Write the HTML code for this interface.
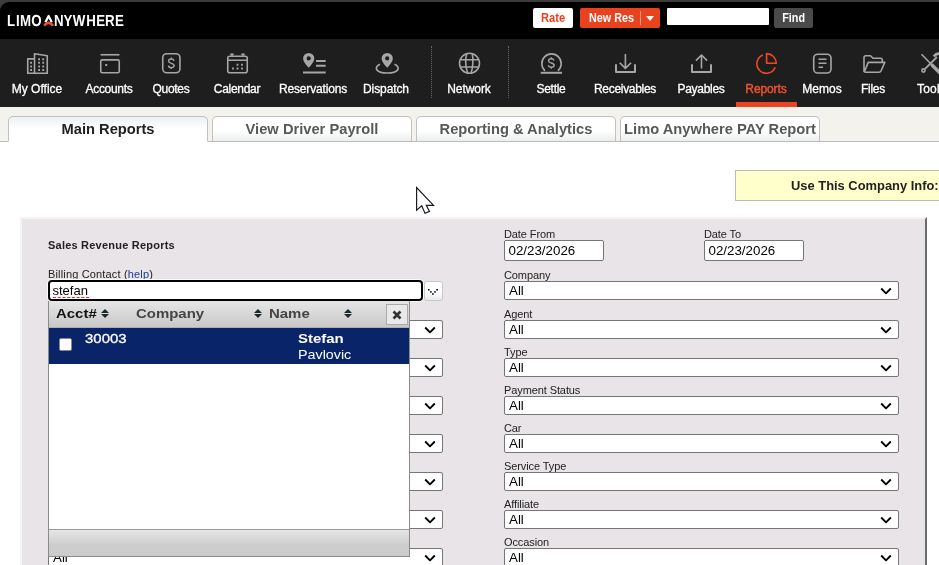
<!DOCTYPE html>
<html><head><meta charset="utf-8">
<style>
*{box-sizing:border-box;margin:0;padding:0}
html,body{width:939px;height:565px;overflow:hidden;background:#fff;font-family:"Liberation Sans",sans-serif;}
#root{will-change:transform;position:relative;width:939px;height:565px;overflow:hidden;background:#fff}
.abs{position:absolute}
#topgray{left:0;top:0;width:939px;height:12px;background:#3c3c3c}
#hdr{left:0;top:2px;width:960px;height:37px;background:#000;border-top-left-radius:9px}
.btn{position:absolute;font-weight:bold;font-size:12px;text-align:center;border-radius:2px;white-space:nowrap}
#rate{left:533px;top:8px;width:40px;height:20px;background:#fff;color:#e8421f;line-height:20px}
#newres{left:580px;top:8px;width:80px;height:20px;background:#e8421f;color:#fff;line-height:20px;text-align:left;padding-left:9px}
#find{left:774px;top:8px;width:39px;height:20px;background:#4a4a4a;color:#fff;line-height:20px}
#srch{left:667px;top:8px;width:102px;height:17px;background:#fff;border-radius:1px}
#nav{left:0;top:39px;width:939px;height:68px;background:#1e1e1e}
.ni{position:absolute;top:0;height:68px;color:#fff;font-size:12px;letter-spacing:-0.3px;-webkit-text-stroke:0.3px #fff;text-align:center;white-space:nowrap}
.ni span{position:absolute;left:-30px;right:-30px;top:43px;line-height:14px;text-align:center}
.ni.act{color:#f0512b;-webkit-text-stroke:0.45px #f0512b}
.sep{position:absolute;top:46px;height:52px;width:0;border-left:1px dotted #666}
#tabbar{left:0;top:107px;width:939px;height:35px;background:#f4f2ec;border-bottom:1px solid #bdbdbd}
.tab{position:absolute;top:116px;height:26px;border:1px solid #c2c2c2;border-bottom:1px solid #bdbdbd;border-radius:5px 5px 0 0;background:linear-gradient(#fff 55%,#eceeee);color:#585858;font-weight:bold;font-size:14.700px;line-height:24px;text-align:center;white-space:nowrap}
.tab.sel{background:linear-gradient(#ecf0f2,#fff 50%);color:#222;border-bottom:1px solid #fff}
#useco{left:735px;top:170px;width:220px;height:31px;background:#ffffcc;border:1px solid #bbb;font-weight:bold;font-size:12px;line-height:31px;color:#222;padding-left:55px;white-space:nowrap}
#panel{left:20px;top:217px;width:907px;height:360px;background:#e8e4e8;border-right:2px solid #6a6a6a;border-top:2px solid #f4f4f4;border-left:2px solid #f4f4f4}
.lbl{position:absolute;font-size:11px;color:#222;line-height:13px;white-space:nowrap;letter-spacing:-0.100px}
.sel2{position:absolute;left:504px;width:395px;height:19px;background:#fff;border:1px solid #767676;border-radius:2px;font-size:13.330px;line-height:17px;padding-left:4px;color:#000}
.chev{position:absolute;width:12px;height:8px}
.sel2 .chev{right:6px;top:5px}
.dt{position:absolute;height:21px;width:100px;background:#fff;border:1px solid #767676;border-radius:2px;font-size:13.330px;line-height:19px;padding-left:3.500px;color:#000}
.ssel{position:absolute;left:48px;width:395px;height:19px;background:#fff;border:1px solid #767676;border-radius:2px}
.ssel .chev{right:6px;top:5px}

#bc{left:48px;top:280px;width:375px;height:21px;background:#fff;border:2px solid #000;border-radius:4px;font-size:13px;line-height:18px;padding-left:2.500px;color:#000;box-shadow:0 0 0 1px #fbfafb}
#bc i{position:absolute;left:3px;top:14.500px;width:36px;height:0;border-top:1px dashed #f22}
#bcbtn{left:424px;top:281px;width:19px;height:20px;background:linear-gradient(#fff 55%,#eaeaea);border:1px solid #c8c8c8;border-radius:3px}
#dd{left:48px;top:301px;width:362px;height:256px;background:#fff;border:1px solid #8a8a8a;border-top:none}
#ddh{position:absolute;left:0;top:0;width:360px;height:27px;background:linear-gradient(#e6e6e6,#c8c8c8);border-bottom:1px solid #b0b0b0}
#ddr{position:absolute;left:0;top:27px;width:360px;height:36px;background:#0a246a;color:#fff}
#ddf{position:absolute;left:0;top:228px;width:360px;height:27px;background:linear-gradient(#e6e6e6,#cccccc 60%);border-top:1px solid #999}
.vx{position:absolute;top:5px;font-size:13px;line-height:16px;color:#444;white-space:nowrap;transform-origin:0 50%;transform:scaleX(1.15)}
#ddr .vx{color:#fff}
.srt{position:absolute;top:7.500px;width:8px;height:10px;margin-left:-0.500px}
.srt:before{content:"";position:absolute;left:0;top:0;border:4px solid transparent;border-bottom:4.500px solid #1c2a2e;border-top:none}
.srt:after{content:"";position:absolute;left:0;top:5.500px;border:4px solid transparent;border-top:4.500px solid #1c2a2e;border-bottom:none}
#ddx{position:absolute;left:337px;top:3px;width:22px;height:21px;background:#e9e9e9;border:1px solid #aaa}
#cb{position:absolute;left:9.500px;top:10px;width:13px;height:13px;background:#fff;border:1px solid #8a8a8a;border-radius:2px}

#icons .g *{fill:none;stroke:#a6a6a6;stroke-width:1.600;stroke-linecap:butt;stroke-linejoin:round}
#icons .g .w{stroke-width:2}
#icons .g .ds{stroke-width:1.350}
#icons .g .f{fill:#a6a6a6;stroke:none;fill-rule:evenodd}
#icons .g.o *{stroke:#f2481f}
#icons .d{font-family:"Liberation Sans",sans-serif;fill:#a6a6a6;text-anchor:middle}
</style></head><body><div id="root">
<div class="abs" id="topgray"></div>
<div class="abs" id="hdr"></div>
<svg class="abs" id="logo" style="left:0;top:8px;width:135px;height:24px" viewBox="0 8 135 24"><text transform="scale(0.83,1.0)" x="8.50 19.36 24.18 37.55 65.15 76.59 87.59 103.94 116.11 126.59 138.64" y="26.00" style="font:bold 16.0px 'Liberation Sans',sans-serif;fill:#fff;text-rendering:geometricPrecision">LIMONYWHERE</text><path d="M45.400 22.200L48.600 15.900L51.800 22.200" fill="none" stroke="#fff" stroke-width="2.200" stroke-linejoin="round"/><path d="M44.200 25.800Q48.600 19.600 53 25.800" fill="none" stroke="#f04e23" stroke-width="2.600"/></svg>
<div class="btn" id="rate"><span style="display:inline-block;transform:scaleX(0.93)">Rate</span></div>
<div class="btn" id="newres"><span style="display:inline-block;transform-origin:0 50%;transform:scaleX(0.9)">New Res</span><i style="position:absolute;left:60px;top:3px;height:14px;border-left:1px solid #f39a86"></i><i style="position:absolute;left:66px;top:8px;border:4px solid transparent;border-top:5px solid #fff;border-bottom:none"></i></div>
<div class="abs" id="srch"></div>
<div class="btn" id="find"><span style="display:inline-block;transform:scaleX(0.9)">Find</span></div>

<div class="abs" id="nav">
 <div class="ni" style="left:12px;width:50px"><span style="letter-spacing:0px">My Office</span></div>
 <div class="ni" style="left:84px;width:50px"><span>Accounts</span></div>
 <div class="ni" style="left:146px;width:50px"><span>Quotes</span></div>
 <div class="ni" style="left:212px;width:50px"><span>Calendar</span></div>
 <div class="ni" style="left:288px;width:50px"><span style="letter-spacing:-0.15px">Reservations</span></div>
 <div class="ni" style="left:361px;width:50px"><span style="letter-spacing:-0.1px">Dispatch</span></div>
 <div class="ni" style="left:444px;width:50px"><span style="letter-spacing:-0.05px">Network</span></div>
 <div class="ni" style="left:526px;width:50px"><span>Settle</span></div>
 <div class="ni" style="left:600px;width:50px"><span>Receivables</span></div>
 <div class="ni" style="left:676px;width:50px"><span>Payables</span></div>
 <div class="ni act" style="left:741px;width:50px"><span style="letter-spacing:-0.1px">Reports</span></div>
 <div class="ni" style="left:797px;width:50px"><span style="letter-spacing:0px">Memos</span></div>
 <div class="ni" style="left:848px;width:50px"><span>Files</span></div>
 <div class="ni" style="left:912px;width:50px"><span style="text-align:left;left:5px;letter-spacing:0.2px">Tools</span></div>
 <div class="abs" style="left:736px;top:63px;width:61px;height:5px;background:#ee4220"></div>
</div>
<svg class="abs" id="icons" style="left:0;top:39px;width:939px;height:68px" viewBox="0 39 939 68">
<g class="g">
<!-- my office -->
<path d="M27.750 73.250V58.900H34.500M34.500 73.250V53.800L47.250 55.700V73.250M27 73.250H48"/>
<path class="w" d="M38.200 59.200h1.800M42.300 59.200h1.800M38.200 62.800h1.800M42.300 62.800h1.800M38.200 66.400h1.800M42.300 66.400h1.800M38.200 70h1.800M42.300 70h1.800M30.200 62.800h1.800M30.200 66.400h1.800M30.200 70h1.800"/>
<!-- accounts -->
<rect x="100.750" y="59.900" width="18.500" height="12.800" rx="1.500"/><path d="M100.500 54.750H119.500"/><path class="w" d="M105.200 65h2"/>
<!-- quotes -->
<rect x="162.750" y="53.750" width="17.200" height="19" rx="4"/>
<!-- calendar -->
<rect x="227.750" y="56.300" width="19.500" height="16.500" rx="2"/><path d="M228 60.300H247M232 53.500V56.500M243 53.500V56.500M230.300 54.300H233.700M241.300 54.300H244.700"/>
<path class="w" d="M236.600 64.800h1.800M241.100 64.800h1.800M232.100 68.600h1.800M236.600 68.600h1.800M241.100 68.600h1.800"/>
<!-- reservations -->
<path class="f" d="M308.700 67.800c-3.800-4.200-5.600-6.800-5.600-9.300a5.600 5.600 0 0 1 11.200 0c0 2.500-1.800 5.100-5.600 9.300zM308.700 56.300a2.100 2.100 0 1 0 0 4.200a2.100 2.100 0 1 0 0-4.200z"/>
<path class="w" d="M316 61h9.700M316 65.700h9.700M303 72.500h22.700"/>
<!-- dispatch -->
<path class="f" d="M387.200 67.800c-3.800-4.200-5.600-6.800-5.600-9.300a5.600 5.600 0 0 1 11.200 0c0 2.500-1.800 5.100-5.600 9.300zM387.200 56.300a2.100 2.100 0 1 0 0 4.200a2.100 2.100 0 1 0 0-4.200z"/>
<path d="M380 64.200C373.500 67.200 375.500 73 387.300 73S401 67.200 394.500 64.200" style="stroke-width:1.700"/>
<!-- network -->
<g style="stroke-width:1.150"><circle cx="469.500" cy="63.300" r="10"/><path d="M460.500 59.800H478.500M460.500 67H478.500M466.800 54C465 58 465.500 69 468 73M472.300 54C473.500 59 473 68 471 73"/></g>
<!-- settle -->
<path d="M545 70.800A9.700 9.700 0 1 1 558 70.800"/><path class="w" d="M540.700 72.800H562"/>
<!-- receivables -->
<path class="w" d="M616 64.200V72H635V64.200"/><path d="M625.400 54V68M619.700 62.700L625.400 68.400L631.100 62.700"/>
<!-- payables -->
<path class="w" d="M692 64.200V71.900H711V64.200"/><path d="M701.500 68.600V55M695.900 60.600L701.500 55L707.100 60.600"/>
<!-- memos -->
<rect x="813.700" y="54.200" width="17.300" height="18.800" rx="4"/><path d="M818.500 59.300H826.500M818.500 63.300H826.500M818.500 67.300H823"/>
<!-- files -->
<path d="M864 72V57.500Q864 55.700 865.800 55.700H870.500L873 58.200H880.500Q882.300 58.200 882.300 60V62.200M864.200 72.200L868.200 62.400H884.800L881 71Q880.500 72.200 879 72.200H865.500Q864 72.200 864 70.700"/>
<!-- tools -->
<path d="M921.500 54.200L932 65"/><path d="M931.500 64.500L941 74" style="stroke-width:3.400"/><path d="M937 57L925 68.800" style="stroke-width:1.800"/><circle cx="923.500" cy="70.500" r="1.600"/><path d="M933.800 56.500q2.500-3.500 6.500-2.800" style="stroke-width:2.600"/>
<path class="ds" d="M173.96 60.92C173.68 59.31 172.25 59.02 171.30 59.02C169.40 59.02 168.55 60.07 168.55 61.02C168.55 62.73 170.35 63.02 171.30 63.30C172.73 63.68 174.15 64.06 174.15 65.58C174.15 66.72 173.20 67.58 171.30 67.58C169.88 67.58 168.55 67.00 168.36 65.58M171.30 57.60V59.02M171.30 67.58V69.00"/><path class="ds" d="M553.96 60.62C553.67 59.01 552.25 58.73 551.30 58.73C549.40 58.73 548.54 59.77 548.54 60.72C548.54 62.43 550.35 62.72 551.30 63.00C552.72 63.38 554.15 63.76 554.15 65.28C554.15 66.42 553.20 67.28 551.30 67.28C549.88 67.28 548.54 66.70 548.35 65.28M551.30 57.30V58.73M551.30 67.28V68.70"/>
</g>
<g class="g o">
<path d="M762.900 54.900A9.500 9.500 0 1 0 775.200 67.200"/><path d="M766.600 53.600V63.300H776.300A9.700 9.700 0 0 0 766.600 53.600z"/>
</g>
</svg>
<div class="sep" style="left:431px"></div>
<div class="sep" style="left:508px"></div>

<div class="abs" id="tabbar"></div>
<div class="tab sel" style="left:8px;width:200px">Main Reports</div>
<div class="tab" style="left:212px;width:200px">View Driver Payroll</div>
<div class="tab" style="left:416px;width:200px">Reporting &amp; Analytics</div>
<div class="tab" style="left:620px;width:200px">Limo Anywhere PAY Report</div>

<div class="abs" id="useco"><span style="display:inline-block;transform-origin:0 50%;transform:scaleX(1.075)">Use This Company Info:</span></div>
<div class="abs" id="panel"></div>
<div class="ssel" style="top:320px"><svg class="chev" viewBox="0 0 12 8"><path d="M1.200 1.500L6 6.300L10.800 1.500" fill="none" stroke="#000" stroke-width="1.900" stroke-linecap="butt" stroke-linejoin="round"/></svg></div>
<div class="ssel" style="top:358px"><svg class="chev" viewBox="0 0 12 8"><path d="M1.200 1.500L6 6.300L10.800 1.500" fill="none" stroke="#000" stroke-width="1.900" stroke-linecap="butt" stroke-linejoin="round"/></svg></div>
<div class="ssel" style="top:396px"><svg class="chev" viewBox="0 0 12 8"><path d="M1.200 1.500L6 6.300L10.800 1.500" fill="none" stroke="#000" stroke-width="1.900" stroke-linecap="butt" stroke-linejoin="round"/></svg></div>
<div class="ssel" style="top:434px"><svg class="chev" viewBox="0 0 12 8"><path d="M1.200 1.500L6 6.300L10.800 1.500" fill="none" stroke="#000" stroke-width="1.900" stroke-linecap="butt" stroke-linejoin="round"/></svg></div>
<div class="ssel" style="top:472px"><svg class="chev" viewBox="0 0 12 8"><path d="M1.200 1.500L6 6.300L10.800 1.500" fill="none" stroke="#000" stroke-width="1.900" stroke-linecap="butt" stroke-linejoin="round"/></svg></div>
<div class="ssel" style="top:510px"><svg class="chev" viewBox="0 0 12 8"><path d="M1.200 1.500L6 6.300L10.800 1.500" fill="none" stroke="#000" stroke-width="1.900" stroke-linecap="butt" stroke-linejoin="round"/></svg></div>
<div class="ssel" style="top:548px;font-size:13.330px;line-height:17px;padding-left:4px;color:#000">All<svg class="chev" viewBox="0 0 12 8"><path d="M1.200 1.500L6 6.300L10.800 1.500" fill="none" stroke="#000" stroke-width="1.900" stroke-linecap="butt" stroke-linejoin="round"/></svg></div>
<div class="lbl" style="left:504px;top:269px">Company</div>
<div class="sel2" style="top:281px">All<svg class="chev" viewBox="0 0 12 8"><path d="M1.200 1.500L6 6.300L10.800 1.500" fill="none" stroke="#000" stroke-width="1.900" stroke-linecap="butt" stroke-linejoin="round"/></svg></div>
<div class="lbl" style="left:504px;top:308px">Agent</div>
<div class="sel2" style="top:320px">All<svg class="chev" viewBox="0 0 12 8"><path d="M1.200 1.500L6 6.300L10.800 1.500" fill="none" stroke="#000" stroke-width="1.900" stroke-linecap="butt" stroke-linejoin="round"/></svg></div>
<div class="lbl" style="left:504px;top:346px">Type</div>
<div class="sel2" style="top:358px">All<svg class="chev" viewBox="0 0 12 8"><path d="M1.200 1.500L6 6.300L10.800 1.500" fill="none" stroke="#000" stroke-width="1.900" stroke-linecap="butt" stroke-linejoin="round"/></svg></div>
<div class="lbl" style="left:504px;top:384px">Payment Status</div>
<div class="sel2" style="top:396px">All<svg class="chev" viewBox="0 0 12 8"><path d="M1.200 1.500L6 6.300L10.800 1.500" fill="none" stroke="#000" stroke-width="1.900" stroke-linecap="butt" stroke-linejoin="round"/></svg></div>
<div class="lbl" style="left:504px;top:422px">Car</div>
<div class="sel2" style="top:434px">All<svg class="chev" viewBox="0 0 12 8"><path d="M1.200 1.500L6 6.300L10.800 1.500" fill="none" stroke="#000" stroke-width="1.900" stroke-linecap="butt" stroke-linejoin="round"/></svg></div>
<div class="lbl" style="left:504px;top:460px">Service Type</div>
<div class="sel2" style="top:472px">All<svg class="chev" viewBox="0 0 12 8"><path d="M1.200 1.500L6 6.300L10.800 1.500" fill="none" stroke="#000" stroke-width="1.900" stroke-linecap="butt" stroke-linejoin="round"/></svg></div>
<div class="lbl" style="left:504px;top:498px">Affiliate</div>
<div class="sel2" style="top:510px">All<svg class="chev" viewBox="0 0 12 8"><path d="M1.200 1.500L6 6.300L10.800 1.500" fill="none" stroke="#000" stroke-width="1.900" stroke-linecap="butt" stroke-linejoin="round"/></svg></div>
<div class="lbl" style="left:504px;top:536px">Occasion</div>
<div class="sel2" style="top:548px">All<svg class="chev" viewBox="0 0 12 8"><path d="M1.200 1.500L6 6.300L10.800 1.500" fill="none" stroke="#000" stroke-width="1.900" stroke-linecap="butt" stroke-linejoin="round"/></svg></div>
<div class="lbl" style="left:504px;top:228px">Date From</div>
<div class="lbl" style="left:704px;top:228px">Date To</div>
<div class="dt" style="left:504px;top:240px">02/23/2026</div>
<div class="dt" style="left:704px;top:240px">02/23/2026</div>
<div class="lbl" style="left:48px;top:239px;font-weight:bold;letter-spacing:0.22px">Sales Revenue Reports</div>
<div class="lbl" style="left:48px;top:268px;letter-spacing:0.160px">Billing Contact (<span style="color:#1a3a9a">help</span>)</div>
<div class="abs" id="bc">stefan<i></i></div>
<div class="abs" id="bcbtn"></div><svg class="abs" style="left:424px;top:281px;width:20px;height:20px" viewBox="424 281 20 20"><rect x="428.0" y="289.0" width="1.600" height="1.600" fill="#111"/><rect x="430.1" y="291.1" width="1.600" height="1.600" fill="#111"/><rect x="432.1" y="293.2" width="1.600" height="1.600" fill="#111"/><rect x="434.2" y="291.1" width="1.600" height="1.600" fill="#111"/><rect x="436.3" y="289.0" width="1.600" height="1.600" fill="#111"/></svg>
<div class="abs" id="dd">
 <div id="ddh">
  <b class="vx" style="left:7px;color:#111">Acct#</b><i class="srt" style="left:52px"></i>
  <b class="vx" style="left:87px">Company</b><i class="srt" style="left:205px"></i>
  <b class="vx" style="left:220px">Name</b><i class="srt" style="left:295px"></i>
  <div id="ddx"><svg viewBox="0 0 10 10" style="position:absolute;left:5px;top:5px;width:10px;height:10px"><path d="M1.500 1.500L8.500 8.500M8.500 1.500L1.500 8.500" stroke="#333" stroke-width="2.600" fill="none"/></svg></div>
 </div>
 <div id="ddr">
  <i id="cb"></i>
  <span class="vx" style="left:36px;top:3px;-webkit-text-stroke:0.300px #fff">30003</span>
  <b class="vx" style="left:249px;top:3px">Stefan</b>
  <span class="vx" style="left:249px;top:19px;transform:scaleX(1.1)">Pavlovic</span>
 </div>
 <div id="ddf"></div>
</div>
<svg class="abs" style="left:410px;top:180px;width:30px;height:40px" viewBox="410 180 30 40"><path d="M416.600 187.600L416.600 210.200L421.700 205.800L425 213.200L429.500 211.400L426.300 205.300L433.500 205.300Z" fill="#fff" stroke="#1c1c28" stroke-width="1.200" stroke-linejoin="miter"/></svg>
</div></body></html>
